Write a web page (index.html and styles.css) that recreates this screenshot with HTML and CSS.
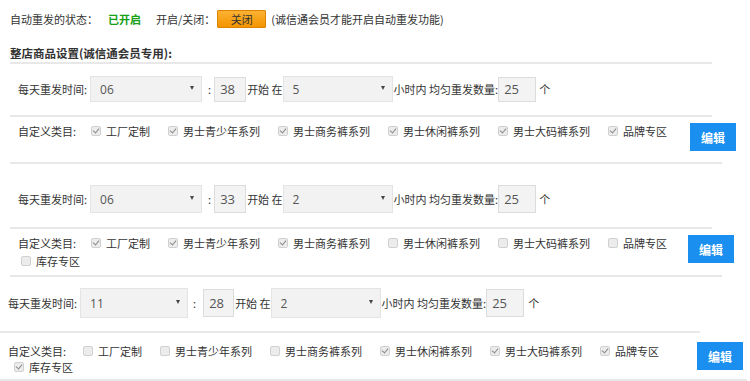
FILE: index.html
```html
<!DOCTYPE html>
<html lang="zh-CN">
<head>
    <meta charset="UTF-8">
    <title>自动重发设置</title>
    <link rel="stylesheet" href="styles.css">
</head>
<body>
    <div class="status">
        <span>自动重发的状态：</span>
        <span class="status-on">已开启</span>
        <span class="status-label">开启/关闭：</span>
        <button type="button" class="btn-toggle">关闭</button>
        <span class="status-tip">(诚信通会员才能开启自动重发功能)</span>
    </div>

    <h2 class="shop-title">整店商品设置(诚信通会员专用):</h2>

    <!-- 方案 1 -->
    <div class="plan plan-1">
        <div class="time-row">
            <span class="time-label">每天重发时间:</span>
            <div class="select"><span>06</span><i class="arrow"></i></div>
            <span class="colon">:</span>
            <div class="num">38</div>
            <span class="txt">开始 在</span>
            <div class="select select-small"><span>5</span><i class="arrow"></i></div>
            <span class="txt">小时内 均匀重发数量:</span>
            <div class="num num-wide">25</div>
            <span class="unit">个</span>
        </div>
        <div class="cat-row">
            <div class="cat-list">
                <span class="cat-label">自定义类目:</span>
                <label class="cat"><span class="box checked"></span>工厂定制</label>
                <label class="cat"><span class="box checked"></span>男士青少年系列</label>
                <label class="cat"><span class="box checked"></span>男士商务裤系列</label>
                <label class="cat"><span class="box checked"></span>男士休闲裤系列</label>
                <label class="cat"><span class="box checked"></span>男士大码裤系列</label>
                <label class="cat"><span class="box checked"></span>品牌专区</label>
            </div>
            <button type="button" class="btn-edit">编辑</button>
        </div>
    </div>

    <!-- 方案 2 -->
    <div class="plan plan-2">
        <div class="time-row">
            <span class="time-label">每天重发时间:</span>
            <div class="select"><span>06</span><i class="arrow"></i></div>
            <span class="colon">:</span>
            <div class="num">33</div>
            <span class="txt">开始 在</span>
            <div class="select select-small"><span>2</span><i class="arrow"></i></div>
            <span class="txt">小时内 均匀重发数量:</span>
            <div class="num num-wide">25</div>
            <span class="unit">个</span>
        </div>
        <div class="cat-row">
            <div class="cat-list">
                <span class="cat-label">自定义类目:</span>
                <label class="cat"><span class="box checked"></span>工厂定制</label>
                <label class="cat"><span class="box checked"></span>男士青少年系列</label>
                <label class="cat"><span class="box checked"></span>男士商务裤系列</label>
                <label class="cat"><span class="box"></span>男士休闲裤系列</label>
                <label class="cat"><span class="box"></span>男士大码裤系列</label>
                <label class="cat"><span class="box"></span>品牌专区</label>
                <label class="cat"><span class="box"></span>库存专区</label>
            </div>
            <button type="button" class="btn-edit">编辑</button>
        </div>
    </div>

    <!-- 方案 3 -->
    <div class="plan plan-3">
        <div class="time-row">
            <span class="time-label">每天重发时间:</span>
            <div class="select"><span>11</span><i class="arrow"></i></div>
            <span class="colon">:</span>
            <div class="num">28</div>
            <span class="txt">开始 在</span>
            <div class="select select-small"><span>2</span><i class="arrow"></i></div>
            <span class="txt">小时内 均匀重发数量:</span>
            <div class="num num-wide">25</div>
            <span class="unit">个</span>
        </div>
        <div class="cat-row">
            <div class="cat-list">
                <span class="cat-label">自定义类目:</span>
                <label class="cat"><span class="box"></span>工厂定制</label>
                <label class="cat"><span class="box"></span>男士青少年系列</label>
                <label class="cat"><span class="box"></span>男士商务裤系列</label>
                <label class="cat"><span class="box checked"></span>男士休闲裤系列</label>
                <label class="cat"><span class="box checked"></span>男士大码裤系列</label>
                <label class="cat"><span class="box checked"></span>品牌专区</label>
                <label class="cat"><span class="box checked"></span>库存专区</label>
            </div>
            <button type="button" class="btn-edit">编辑</button>
        </div>
    </div>
</body>
</html>
```

FILE: styles.css
```css
* {
    box-sizing: border-box;
}

body {
    margin: 0;
    padding: 0 0 0 10px;
    font-family: "Noto Sans CJK SC", "Open Sans", sans-serif;
    font-size: 11px;
    color: #333;
    background: #fff;
    overflow: hidden;
}

/* 状态栏 */
.status {
    display: flex;
    align-items: center;
    height: 20px;
    margin-top: 9px;
    line-height: 18px;
}

.status-on {
    margin-left: 10px;
    color: #18a018;
    font-weight: bold;
}

.status-label {
    margin-left: 15px;
}

.btn-toggle {
    width: 49px;
    height: 18px;
    margin-left: 2px;
    padding: 0;
    font-family: inherit;
    font-size: 11px;
    line-height: 16px;
    color: #333;
    background: linear-gradient(#fcb233, #f39400);
    border: 1px solid #dc8400;
    border-radius: 1px;
}

.status-tip {
    margin-left: 5px;
}

.shop-title {
    width: 702px;
    margin: 15px 0 0;
    font-size: 11.5px;
    font-weight: bold;
    line-height: 18px;
    border-bottom: 2px solid #e8e8e8;
}

/* 重发时间 */
.time-row {
    display: flex;
    align-items: center;
    width: 702px;
    padding: 12px 0 13px 8px;
    border-bottom: 2px solid #e8e8e8;
}

.time-label {
    margin-right: 3px;
}

.select {
    position: relative;
    display: flex;
    align-items: center;
    width: 112px;
    height: 26px;
    padding-left: 9px;
    font-family: "Open Sans", sans-serif;
    font-size: 12px;
    color: #555;
    background: #f2f2f2;
    border: 1px solid #e4e4e4;
}

.select-small {
    width: 110px;
}

.arrow {
    position: absolute;
    right: 7px;
    top: 50%;
    margin-top: -3px;
    border-left: 2.5px solid transparent;
    border-right: 2.5px solid transparent;
    border-top: 4px solid #444;
}

.colon {
    margin: 0 3px 0 6px;
}

.num {
    display: flex;
    align-items: center;
    width: 32px;
    height: 25px;
    padding-left: 5px;
    font-family: "Open Sans", sans-serif;
    font-size: 13px;
    color: #555;
    background: #f3f3f3;
    border: 1px solid #dcdcdc;
}

.num-wide {
    width: 38px;
}

.txt {
    margin-left: 1px;
}

.unit {
    margin-left: 3px;
}

/* 自定义类目 */
.cat-row {
    display: flex;
    align-items: flex-start;
    width: 712px;
    height: 47px;
    padding: 6px 0 0 8px;
    border-bottom: 2px solid #e8e8e8;
}

.cat-list {
    display: flex;
    flex-wrap: wrap;
    flex-shrink: 0;
    width: 670px;
    margin-top: -1px;
    line-height: 18px;
}

.cat-label {
    margin-right: 12px;
}

.cat {
    display: flex;
    align-items: center;
    margin: 0 15px 0 3px;
}

.box {
    position: relative;
    width: 10px;
    height: 10px;
    margin-right: 5px;
    background: #ececec;
    border: 1px solid #d0d0d0;
    border-radius: 2px;
}

.box.checked::after {
    content: "";
    position: absolute;
    left: 2px;
    top: 0;
    width: 3px;
    height: 5px;
    border-right: 1.5px solid #8a8a8a;
    border-bottom: 1.5px solid #8a8a8a;
    transform: rotate(40deg);
}

.btn-edit {
    flex-shrink: 0;
    width: 46px;
    height: 28px;
    margin-left: 2px;
    padding: 0;
    font-family: inherit;
    font-size: 12px;
    font-weight: bold;
    color: #fff;
    background: #1b8ff0;
    border: none;
}

/* 方案 2 */
.plan-2 .time-row {
    padding-top: 21px;
    padding-bottom: 14px;
}

.plan-2 .select,
.plan-2 .num {
    height: 28px;
}

.plan-2 .cat-row {
    height: 48px;
}

.plan-2 .btn-edit {
    margin-left: 0;
}

/* 方案 3 */
.plan-3 {
    margin-left: -10px;
}

.plan-3 .time-row {
    width: 700px;
    padding: 11px 0 13px 8px;
}

.plan-3 .time-label {
    margin-right: 3px;
}

.plan-3 .select {
    width: 108px;
    height: 30px;
}

.plan-3 .select-small {
    width: 110px;
}

.plan-3 .colon {
    margin: 0 7px 0 5px;
}

.plan-3 .num {
    width: 31px;
    height: 28px;
}

.plan-3 .num-wide {
    width: 38px;
}

.plan-3 .unit {
    margin-left: 4px;
}

.plan-3 .cat-row {
    width: 747px;
    height: 48px;
    padding: 9px 0 0 8px;
}

.plan-3 .cat-list {
    width: 681px;
    margin-top: 1px;
    line-height: 16px;
}

.plan-3 .cat-label {
    margin-right: 14px;
}

.plan-3 .cat-list .cat:last-child {
    margin-left: 6px;
}

.plan-3 .btn-edit {
    margin-left: 8px;
}
```
